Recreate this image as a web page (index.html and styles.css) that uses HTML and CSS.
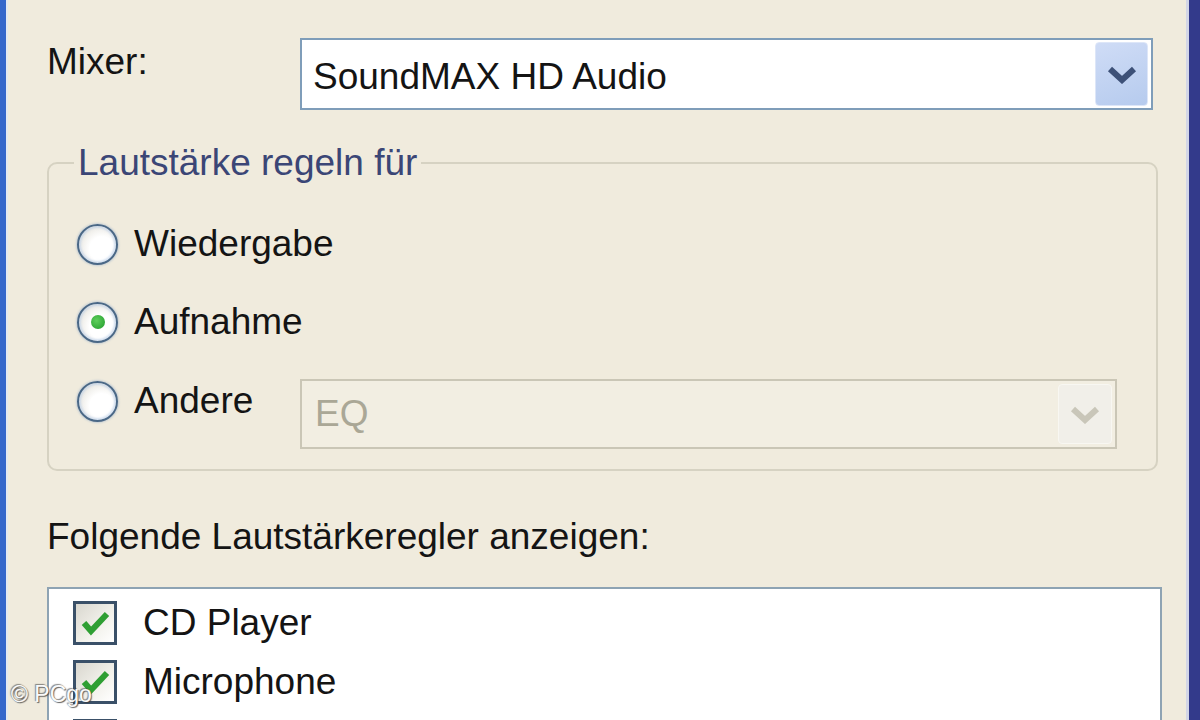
FILE: index.html
```html
<!DOCTYPE html>
<html lang="de">
<head>
<meta charset="utf-8">
<title>Eigenschaften</title>
<link rel="stylesheet" href="styles.css">
</head>
<body>
<div class="window">
  <div class="dialog">
    <div class="mixer-row">
      <label class="field-label">Mixer:</label>
      <div class="combo combo--mixer">
        <span class="combo-value">SoundMAX HD Audio</span>
        <span class="combo-button">
          <svg class="chevron" viewBox="0 0 30 18" width="30" height="18"><polyline points="3,3 15,14 27,3" fill="none" stroke="currentColor" stroke-width="6"/></svg>
        </span>
      </div>
    </div>

    <fieldset class="group">
      <legend class="group-title">Lautstärke regeln für</legend>
      <div class="option-list">
        <div class="option">
          <span class="radio"></span>
          <span>Wiedergabe</span>
        </div>
        <div class="option">
          <span class="radio"><span class="radio-dot"></span></span>
          <span>Aufnahme</span>
        </div>
        <div class="option-other">
          <div class="option option--choice">
            <span class="radio"></span>
            <span>Andere</span>
          </div>
          <div class="combo combo--disabled">
            <span class="combo-value">EQ</span>
            <span class="combo-button combo-button--disabled">
              <svg class="chevron" viewBox="0 0 30 18" width="30" height="18"><polyline points="3,3 15,14 27,3" fill="none" stroke="currentColor" stroke-width="6"/></svg>
            </span>
          </div>
        </div>
      </div>
    </fieldset>

    <p class="list-caption">Folgende Lautstärkeregler anzeigen:</p>

    <div class="control-list">
      <div class="check-row">
        <span class="checkbox"><svg viewBox="0 0 38 38" width="38" height="38"><path d="M8 19 L15 27 L31 10" fill="none" stroke="#2f9f33" stroke-width="6"/></svg></span>
        <span>CD Player</span>
      </div>
      <div class="check-row">
        <span class="checkbox"><svg viewBox="0 0 38 38" width="38" height="38"><path d="M8 19 L15 27 L31 10" fill="none" stroke="#2f9f33" stroke-width="6"/></svg></span>
        <span>Microphone</span>
      </div>
      <div class="check-row">
        <span class="checkbox"></span>
      </div>
    </div>
  </div>
  <span class="credit">© PCgo</span>
</div>
</body>
</html>
```
FILE: styles.css
```css
html, body {
  margin: 0;
  height: 100%;
}

body {
  background: #f0ebdd;
  font-family: "Liberation Sans", Arial, sans-serif;
  font-size: 37px;
  line-height: 42px;
  color: #141414;
  overflow: hidden;
}

/* window frame: blue edges left and right */
.window {
  position: relative;
  box-sizing: border-box;
  width: 1200px;
  height: 720px;
  overflow: hidden;
  border-left: 6px solid #3567cb;
  border-right: 11px solid #333a8b;
  box-shadow: inset 2px 0 0 #e4e9f1, inset -3px 0 0 #d3d6e6;
}

.dialog {
  padding: 38px 0 0 41px;
}

/* mixer selection */
.mixer-row {
  display: flex;
  align-items: flex-start;
}

.field-label {
  width: 253px;
  margin-top: 3px;
}

.combo {
  display: flex;
  box-sizing: border-box;
  border: 2px solid #7f9db9;
  background: #fff;
}

.combo--mixer {
  width: 853px;
  height: 72px;
  padding: 2px 3px 2px 0;
}

.combo-value {
  flex: 1;
  padding: 14px 0 0 11px;
}

.combo-button {
  width: 53px;
  box-sizing: border-box;
  border: 1px solid #dde6f8;
  border-radius: 4px;
  background: linear-gradient(160deg, #cfdcf6, #b6cbee);
  display: flex;
  align-items: center;
  justify-content: center;
  color: #3d5178;
}

.chevron {
  display: block;
  margin-top: 2px;
}

/* group box */
.group {
  margin: 32px 0 0;
  width: 1111px;
  min-width: 0;
  box-sizing: border-box;
  border: 2px solid #d6d2c2;
  border-radius: 10px;
  padding: 39px 0 20px 28px;
}

.group-title {
  padding: 0 4px;
  margin-left: -3px;
  color: #3b4676;
}

.option-list {
  display: flex;
  flex-direction: column;
  gap: 36px;
}

.option {
  display: flex;
  align-items: center;
  gap: 16px;
  height: 42px;
}

.option-other {
  display: flex;
  align-items: flex-start;
}

.option--choice {
  width: 223px;
  margin-top: 1px;
}

.radio {
  width: 41px;
  height: 41px;
  flex: none;
  box-sizing: border-box;
  border-radius: 50%;
  border: 2px solid #4a6887;
  background: radial-gradient(circle at 62% 62%, #ffffff 0 38%, #e4e2da 85%);
  box-shadow: 0 0 2px 1px rgba(130, 160, 200, 0.4), inset 0 0 2px 2px rgba(185, 205, 232, 0.6);
  display: flex;
  align-items: center;
  justify-content: center;
}

.radio-dot {
  width: 14px;
  height: 14px;
  border-radius: 50%;
  background: radial-gradient(circle at 40% 40%, #5fcf5c, #1f9a2a);
}

.combo--disabled {
  width: 817px;
  height: 70px;
  padding: 3px 3px 3px 0;
  border-color: #cac6b6;
  background: #f2eee2;
  color: #aaa796;
}

.combo--disabled .combo-value {
  padding: 9px 0 0 13px;
}

.combo-button--disabled {
  width: 54px;
  border-color: #f8f7f2;
  background: #f1efe9;
  color: #c9c6b9;
}

/* volume controls list */
.list-caption {
  margin: 45px 0 0;
}

.control-list {
  margin-top: 29px;
  width: 1115px;
  height: 200px;
  box-sizing: border-box;
  border: 2px solid #8ea3b3;
  background: #fff;
  padding: 12px 0 0 24px;
}

.check-row {
  display: flex;
  align-items: center;
  gap: 26px;
  height: 44px;
  margin-bottom: 15px;
}

.checkbox {
  width: 44px;
  height: 44px;
  flex: none;
  box-sizing: border-box;
  border: 3px solid #3a5068;
  background: linear-gradient(135deg, #d9d7cf, #f3f2ec 60%, #fff);
  display: flex;
  align-items: center;
  justify-content: center;
}

.credit {
  position: absolute;
  left: 5px;
  bottom: 14px;
  font-size: 23px;
  line-height: 1;
  color: #fafafa;
  text-shadow: 1px 1px 1px rgba(60, 60, 60, 0.8), -1px -1px 1px rgba(60, 60, 60, 0.6);
}
```
